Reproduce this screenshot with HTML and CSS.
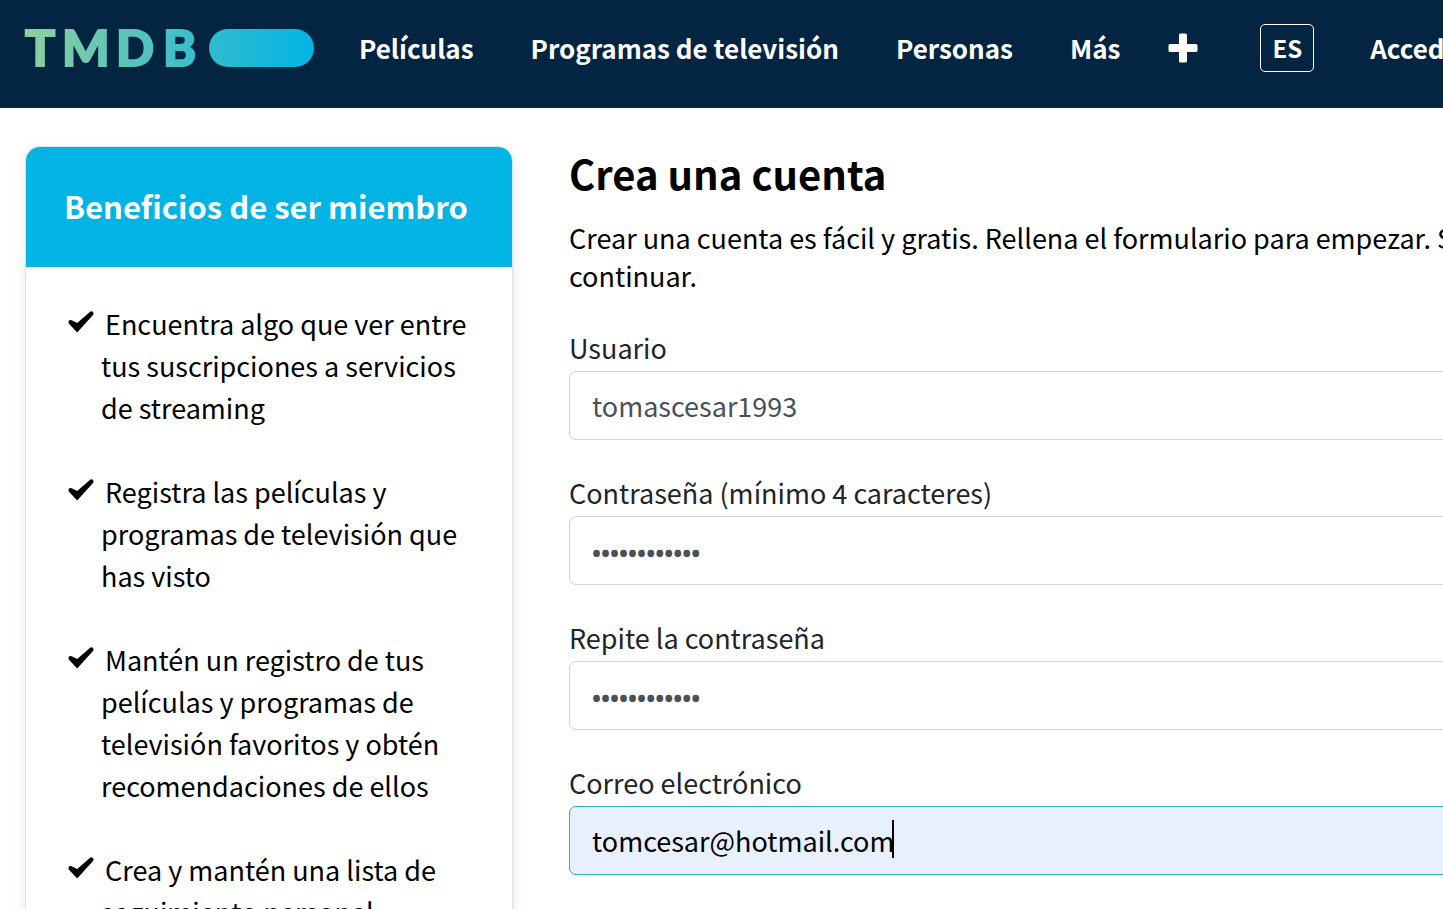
FILE: index.html
```html
<!DOCTYPE html>
<html lang="es">
<head>
<meta charset="utf-8">
<meta name="viewport" content="width=device-width, initial-scale=1">
<title>Crea una cuenta — TMDB</title>
<link rel="stylesheet" href="styles.css">
</head>
<body>
<svg class="defs" aria-hidden="true">
  <symbol id="check" viewBox="0 0 26 22">
    <path d="M0.6 10.5 Q0.2 12 1.2 13 L9.2 21.6 L25 4 Q26 2.6 25.2 1.4 Q24 -0.4 22.4 0.6 L9.2 12 L3.6 9.2 Q1.4 8.6 0.6 10.5 Z"/>
  </symbol>
</svg>

<header class="topbar">
  <a class="logo" href="#" aria-label="TMDB">
    <svg width="290" height="40" viewBox="0 0 290 40">
      <defs>
        <linearGradient id="brand" gradientUnits="userSpaceOnUse" x1="0" y1="0" x2="290" y2="0">
          <stop offset="0" stop-color="#90cea1"/>
          <stop offset="0.56" stop-color="#3cbec9"/>
          <stop offset="1" stop-color="#00b3e5"/>
        </linearGradient>
      </defs>
      <text class="logo-text" x="0 37 91 138" y="38" fill="url(#brand)" stroke="url(#brand)">TMDB</text>
      <rect x="184" y="1" width="105" height="38" rx="19" fill="url(#brand)"/>
    </svg>
  </a>
  <nav class="menu">
    <a href="#">Películas</a>
    <a href="#">Programas de televisión</a>
    <a href="#">Personas</a>
    <a href="#">Más</a>
  </nav>
  <div class="actions">
    <button class="plus" type="button" aria-label="Añadir">
      <svg width="30" height="30" viewBox="0 0 30 30"><path fill="#fff" d="M12.5 0.5h5a1.5 1.5 0 0 1 1.5 1.5v9h9a1.5 1.5 0 0 1 1.5 1.5v5a1.5 1.5 0 0 1-1.5 1.5h-9v9a1.5 1.5 0 0 1-1.5 1.5h-5a1.5 1.5 0 0 1-1.5-1.5v-9h-9a1.5 1.5 0 0 1-1.5-1.5v-5a1.5 1.5 0 0 1 1.5-1.5h9v-9a1.5 1.5 0 0 1 1.5-1.5z"/></svg>
    </button>
    <button class="lang" type="button">ES</button>
    <a href="#">Acceder</a>
  </div>
</header>

<main class="content">
  <aside class="card">
    <h2 class="card-title">Beneficios de ser miembro</h2>
    <ul class="benefits">
      <li><svg class="check"><use href="#check"/></svg>Encuentra algo que ver entre tus suscripciones a servicios de streaming</li>
      <li><svg class="check"><use href="#check"/></svg>Registra las películas y programas de televisión que has visto</li>
      <li><svg class="check"><use href="#check"/></svg>Mantén un registro de tus películas y programas de televisión favoritos y obtén recomendaciones de ellos</li>
      <li><svg class="check"><use href="#check"/></svg>Crea y mantén una lista de seguimiento personal</li>
    </ul>
  </aside>

  <section class="signup">
    <h1>Crea una cuenta</h1>
    <p class="intro">Crear una cuenta es fácil y gratis. Rellena el formulario para empezar. Se requiere JavaScript para<br>continuar.</p>
    <form class="form">
      <div class="field">
        <label for="username">Usuario</label>
        <input id="username" type="text" value="tomascesar1993">
      </div>
      <div class="field">
        <label for="password">Contraseña (mínimo 4 caracteres)</label>
        <input id="password" type="password" value="abcdefghijkl">
      </div>
      <div class="field">
        <label for="repeat">Repite la contraseña</label>
        <input id="repeat" type="password" value="abcdefghijkl">
      </div>
      <div class="field field-active">
        <label for="email">Correo electrónico</label>
        <input id="email" type="email" value="tomcesar@hotmail.com">
        <span class="caret" aria-hidden="true"></span>
      </div>
    </form>
  </section>
</main>
</body>
</html>
```
FILE: styles.css
```css
* { box-sizing: border-box; }

html { height: 100%; overflow: hidden; }

body {
  margin: 0;
  background: #fff;
  color: #000;
  font-family: "Noto Sans CJK SC", "Noto Sans", sans-serif;
  font-size: 27px;
  line-height: 42px;
}

.defs { display: none; }

.topbar {
  display: flex;
  align-items: center;
  height: 108px;
  padding: 0 0 12px 25px;
  background: #032541;
  white-space: nowrap;
}

.topbar a { color: #fff; text-decoration: none; }

.logo { display: flex; flex: none; margin-right: 44px; }
.logo svg { overflow: visible; }
.logo-text {
  font-family: Lato, sans-serif;
  font-size: 50px;
  font-weight: 900;
  stroke-width: 2px;
}

.menu,
.actions {
  display: flex;
  flex: none;
  align-items: center;
  font-size: 26px;
  font-weight: 700;
}
.menu { gap: 57px; margin-right: 48px; }

.plus {
  display: flex;
  margin-right: 62px;
  padding: 0;
  border: 0;
  background: none;
}

.lang {
  height: 48px;
  margin-right: 56px;
  padding: 0 11px;
  border: 1px solid #fff;
  border-radius: 5px;
  background: none;
  color: #fff;
  font: inherit;
  font-size: 24px;
}

.content {
  display: grid;
  grid-template-columns: 486px 1fr;
  gap: 57px;
  align-items: start;
  padding: 39px 0 0 26px;
}

.card {
  overflow: hidden;
  border-radius: 14px;
  box-shadow: 0 0 0 1px rgba(0, 0, 0, 0.08), 0 4px 16px rgba(0, 0, 0, 0.1);
}

.card-title {
  margin: 0;
  padding: 38px 38px 40px;
  background: #01b4e4;
  color: #fff;
  font-size: 31px;
  font-weight: 700;
  line-height: 42px;
  white-space: nowrap;
}

.benefits {
  display: grid;
  gap: 42px;
  margin: 0;
  padding: 36px 38px 38px 75px;
  list-style: none;
}

.check { width: 26px; height: 22px; margin: 0 11px 2px -33px; }

.signup { min-width: 0; margin-right: -40px; }

h1 {
  margin: 0 0 20px;
  font-size: 40px;
  font-weight: 700;
  line-height: 52px;
}

.intro { margin: 0 0 32px; line-height: 38px; white-space: nowrap; }

.form { display: grid; gap: 32px; }

.field { position: relative; display: grid; gap: 2px; color: #212529; }

.field input {
  width: 100%;
  height: 69px;
  padding: 0 23px 0 22px;
  border: 1px solid #ced4da;
  border-radius: 7px;
  outline: 0;
  background: #fff;
  color: #495057;
  font: inherit;
}

.field input[type="password"] {
  padding-top: 4px;
  font-family: "Noto Sans", sans-serif;
  font-size: 24px;
  font-weight: 700;
}

.field-active input { border-color: #26b0c6; background: #e8f0fe; color: #000; }

.caret {
  position: absolute;
  bottom: 17px;
  left: 323px;
  width: 2px;
  height: 38px;
  background: #000;
}
```
